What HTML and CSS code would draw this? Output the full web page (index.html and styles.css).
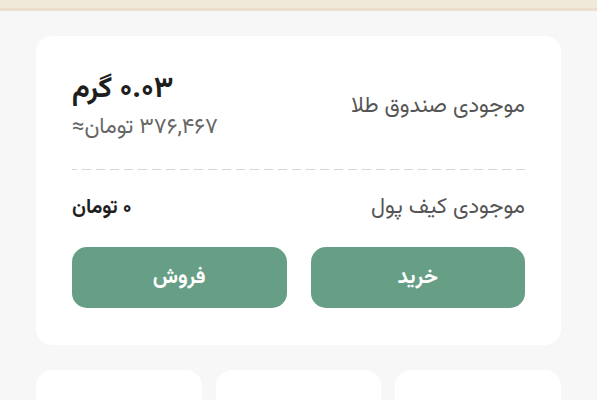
FILE: index.html
```html
<!DOCTYPE html>
<html lang="fa" dir="rtl">
<head>
<meta charset="utf-8">
<link rel="stylesheet" href="styles.css">
</head>
<body>
<div class="topbar"></div>
<main class="page">
  <section class="card">
    <div class="row gold-row">
      <div class="label">موجودی صندوق طلا</div>
      <div class="value-block">
        <div class="value-big">۰.۰۳ گرم</div>
        <div class="value-sub">۳۷۶,۴۶۷ تومان≈</div>
      </div>
    </div>
    <div class="divider"></div>
    <div class="row wallet-row">
      <div class="label">موجودی کیف پول</div>
      <div class="value-wallet">۰ تومان</div>
    </div>
    <div class="actions">
      <button class="btn">خرید</button>
      <button class="btn">فروش</button>
    </div>
  </section>
  <section class="tiles">
    <div class="tile"></div>
    <div class="tile"></div>
    <div class="tile"></div>
  </section>
</main>
</body>
</html>
```
FILE: styles.css
```css
html, body {
  margin: 0;
  padding: 0;
}
body {
  background: #f7f7f7;
  font-family: "Vazirmatn", "Noto Sans Arabic", "DejaVu Sans", sans-serif;
  width: 597px;
  height: 400px;
  overflow: hidden;
}
.topbar {
  height: 8px;
  background: #f0e9d9;
  border-bottom: 3px solid #ecdfcd;
}
.page {
  padding: 25px 36px 0 36px;
}
.card {
  background: #ffffff;
  border-radius: 16px;
  padding: 36px 36px 37px 36px;
  display: flex;
  flex-direction: column;
}
.row {
  display: flex;
  justify-content: space-between;
  align-items: center;
}
.label {
  font-size: 22px;
  color: #555555;
  line-height: 30px;
}
.value-block {
  display: flex;
  flex-direction: column;
  align-items: flex-end;
  gap: 6px;
}
.value-big {
  font-size: 29px;
  font-weight: 700;
  color: #1e1e1e;
  line-height: 36px;
}
.value-sub {
  font-size: 22px;
  color: #666666;
  line-height: 28px;
}
.divider {
  margin-top: 27px;
  height: 1px;
  background: repeating-linear-gradient(to left, #d6d6d6 0 9px, transparent 9px 14px);
}
.wallet-row {
  margin-top: 23px;
}
.value-wallet {
  font-size: 20px;
  font-weight: 700;
  color: #1e1e1e;
  line-height: 30px;
}
.actions {
  margin-top: 24px;
  display: grid;
  grid-template-columns: 1fr 1fr;
  gap: 24px;
}
.btn {
  height: 61px;
  border: none;
  border-radius: 15px;
  background: #679e86;
  color: #ffffff;
  font-family: inherit;
  font-size: 21px;
  font-weight: 700;
}
.tiles {
  margin-top: 25px;
  display: grid;
  grid-template-columns: repeat(3, 1fr);
  gap: 14px;
}
.tile {
  height: 80px;
  background: #ffffff;
  border-radius: 16px;
}
```
